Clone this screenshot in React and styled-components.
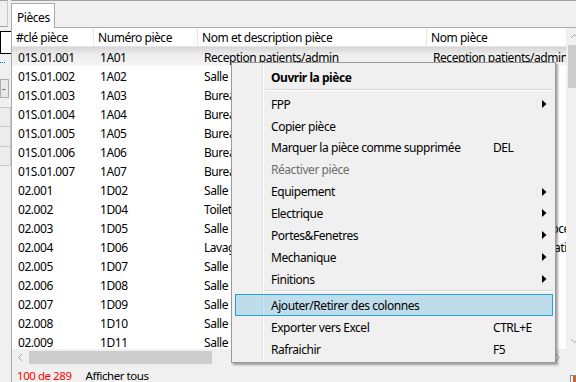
import React from 'react'
import styled, { createGlobalStyle } from 'styled-components'

const GlobalStyle = createGlobalStyle`
    html, body { margin:0; padding:0; background:#f0f0f0; }
    body { font-family:'Noto Sans', 'Open Sans', sans-serif; font-size:12px; letter-spacing:-0.45px; color:#000; }
`

const columns = [82, 104, 229, 320]

const rows = [
    ['01S.01.001', '1A01', 'Reception patients/admin', 'Reception patients/admin'],
    ['01S.01.002', '1A02', 'Salle de consultation', 'Salle de consultation'],
    ['01S.01.003', '1A03', 'Bureau médecin', 'Bureau médecin'],
    ['01S.01.004', '1A04', 'Bureau médecin', 'Bureau médecin'],
    ['01S.01.005', '1A05', 'Bureau infirmière', 'Bureau infirmière'],
    ['01S.01.006', '1A06', 'Bureau administration', 'Bureau administration'],
    ['01S.01.007', '1A07', 'Bureau gestionnaire', 'Bureau gestionnaire'],
    ['02.001', '1D02', 'Salle de réunion', 'Salle de réunion'],
    ['02.002', '1D04', 'Toilettes', 'Toilettes'],
    ['02.003', '1D05', 'Salle de procédures', 'Salle de traitement / procédures'],
    ['02.004', '1D06', 'Lavage et décontamination', 'Lavages et décontamination des instruments'],
    ['02.005', '1D07', 'Salle de consultation', 'Salle de consultation'],
    ['02.006', '1D08', 'Salle de consultation', 'Salle de consultation'],
    ['02.007', '1D09', 'Salle de consultation', 'Salle de consultation'],
    ['02.008', '1D10', 'Salle de consultation', 'Salle de consultation'],
    ['02.009', '1D11', 'Salle de consultation', 'Salle de consultation'],
]

const menu = [
    { label: 'Ouvrir la pièce', bold: true },
    { sep: true },
    { label: 'FPP', sub: true },
    { label: 'Copier pièce' },
    { label: 'Marquer la pièce comme supprimée', key: 'DEL' },
    { label: 'Réactiver pièce', disabled: true },
    { label: 'Equipement', sub: true },
    { label: 'Electrique', sub: true },
    { label: 'Portes&Fenetres', sub: true },
    { label: 'Mechanique', sub: true },
    { label: 'Finitions', sub: true },
    { sep: true },
    { label: 'Ajouter/Retirer des colonnes', active: true },
    { label: 'Exporter vers Excel', key: 'CTRL+E' },
    { label: 'Rafraichir', key: 'F5' },
]

const Chevron = ({ dir }) => {
    const pts = {
        up: '1,6 4.5,2.5 8,6',
        down: '1,3 4.5,6.5 8,3',
        left: '6,1 2.5,4.5 6,8',
        right: '3,1 6.5,4.5 3,8',
    }[dir]
    return (
        <svg width='9' height='9' viewBox='0 0 9 9'>
            <polyline points={pts} fill='none' stroke='#a3a3a3' strokeWidth='1' />
        </svg>
    )
}

const App = () => {
    return (
        <>
            <GlobalStyle />
            <Screen>
                <Sidebar>
                    <SideTop />
                    <SideInput />
                    <SideLink />
                    <SideButton>-</SideButton>
                    <SideList>
                        <span />
                        <span />
                        <span />
                    </SideList>
                </Sidebar>
                <Main>
                    <TabStrip>
                        <Tab>Pièces</Tab>
                    </TabStrip>
                    <Panel>
                        <GridArea>
                            <Table>
                                <HeaderRow>
                                    <HeaderCell $w={columns[0]}>#clé pièce</HeaderCell>
                                    <HeaderCell $w={columns[1]}>Numéro pièce</HeaderCell>
                                    <HeaderCell $w={columns[2]}>Nom et description pièce</HeaderCell>
                                    <HeaderCell $w={columns[3]}>Nom pièce</HeaderCell>
                                </HeaderRow>
                                {rows.map((r, i) => (
                                    <Row key={i} $selected={i === 0}>
                                        {r.map((c, j) => (
                                            <Cell key={j} $w={columns[j]}>{c}</Cell>
                                        ))}
                                    </Row>
                                ))}
                            </Table>
                            <VScroll>
                                <ArrowBox><Chevron dir='up' /></ArrowBox>
                                <VThumb />
                                <Spacer />
                                <ArrowBox><Chevron dir='down' /></ArrowBox>
                            </VScroll>
                            <HScroll>
                                <ArrowBox><Chevron dir='left' /></ArrowBox>
                                <HThumb />
                                <Spacer />
                                <ArrowBox><Chevron dir='right' /></ArrowBox>
                            </HScroll>
                            <Corner />
                        </GridArea>
                        <StatusBar>
                            <Count>100 de 289</Count>
                            <span>Afficher tous</span>
                            <StatusFlag />
                        </StatusBar>
                    </Panel>
                </Main>

                <Menu>
                    {menu.map((m, i) =>
                        m.sep ? (
                            <Separator key={i} />
                        ) : (
                            <MenuItem key={i} $bold={m.bold} $disabled={m.disabled} $active={m.active}>
                                <span>{m.label}</span>
                                <span>{m.key}</span>
                                {m.sub ? (
                                    <svg width='5' height='8' viewBox='0 0 5 8'>
                                        <polygon points='0,0 4.5,4 0,8' fill='#000' />
                                    </svg>
                                ) : <span />}
                            </MenuItem>
                        )
                    )}
                </Menu>
            </Screen>
        </>
    )
}

const Screen = styled.div`
    position:relative;
    width:576px;
    height:382px;
    overflow:hidden;
    display:flex;
    background:#f0f0f0;
`

const Sidebar = styled.div`
    width:11px;
    flex:0 0 11px;
    overflow:hidden;
    display:flex;
    flex-direction:column;
`

const SideTop = styled.div`
    width:8px;
    height:27px;
    box-sizing:border-box;
    border-top:1px solid #a0a0a0;
    border-bottom:1px solid #a0a0a0;
    border-right:1px solid #c8c8c8;
`

const SideInput = styled.div`
    margin-top:4px;
    height:23px;
    width:30px;
    background:#fff;
    border:1px solid #000;
    box-sizing:border-box;
`

const SideLink = styled.div`
    margin-top:8px;
    width:5px;
    border-top:1px dotted #0066cc;
`

const SideButton = styled.div`
    margin-top:16px;
    height:19px;
    width:9px;
    border:1px solid #adadad;
    box-sizing:border-box;
    background:#e8e8e8;
    font-size:11px;
    line-height:15px;
    color:#555;
    padding-left:1px;
`

const SideList = styled.div`
    margin-top:9px;
    width:11px;
    height:59px;
    border:1px solid #c8c8c8;
    border-left:none;
    box-sizing:border-box;
    display:flex;
    flex-direction:column;

    span{
        flex:1;
        border-bottom:1px solid #c8c8c8;
        background:#ececec;
    }
    span:last-child{ border-bottom:none; }
`

const Main = styled.div`
    width:565px;
    flex:0 0 565px;
    display:flex;
    flex-direction:column;
    overflow:hidden;
`

const TabStrip = styled.div`
    height:28px;
    box-sizing:border-box;
    border-top:1px solid #a0a0a0;
    border-bottom:1px solid #acacac;
    display:flex;
    align-items:flex-end;
`

const Tab = styled.div`
    height:25px;
    width:44px;
    box-sizing:border-box;
    margin-bottom:-1px;
    background:#fff;
    border:1px solid #acacac;
    border-bottom:none;
    padding:5px 0 0 5px;
`

const Panel = styled.div`
    flex:1;
    display:flex;
    flex-direction:column;
    border-left:1px solid #acacac;
    min-height:0;
`

const GridArea = styled.div`
    height:338px;
    display:grid;
    grid-template-columns:554px 17px;
    grid-template-rows:321px 17px;
    background:#fff;
`

const Table = styled.div`
    overflow:hidden;
    background:#fff;
`

const HeaderRow = styled.div`
    display:flex;
    height:19px;
    box-sizing:border-box;
    border-bottom:1px solid #e5e5e5;
`

const HeaderCell = styled.div`
    flex:0 0 ${p => p.$w}px;
    box-sizing:border-box;
    padding:2px 0 0 4px;
    line-height:16px;
    white-space:nowrap;
    overflow:hidden;
    border-right:1px solid #e5e5e5;
`

const Row = styled.div`
    display:flex;
    height:19px;
    background:${p => p.$selected ? 'linear-gradient(to bottom, #d6d6d6, #ececec 40%, #f5f5f5)' : '#fff'};
`

const Cell = styled.div`
    flex:0 0 ${p => p.$w}px;
    box-sizing:border-box;
    padding:2px 0 0 6px;
    line-height:17px;
    white-space:nowrap;
    overflow:hidden;
`

const VScroll = styled.div`
    background:#f0f0f0;
    display:flex;
    flex-direction:column;
`

const HScroll = styled.div`
    background:#f0f0f0;
    display:flex;
`

const ArrowBox = styled.div`
    flex:0 0 17px;
    height:17px;
    display:flex;
    align-items:center;
    justify-content:center;
`

const Spacer = styled.div`
    flex:1;
`

const VThumb = styled.div`
    height:43px;
    margin:0 2px;
    background:#cdcdcd;
`

const HThumb = styled.div`
    width:183px;
    margin:2px 0;
    background:#cdcdcd;
`

const Corner = styled.div`
    background:#f0f0f0;
`

const StatusBar = styled.div`
    height:16px;
    display:flex;
    align-items:center;
    gap:14px;
    padding:2px 0 0 5px;
    box-sizing:border-box;
    font-size:11.5px;
    background:#f0f0f0;
`

const Count = styled.span`
    color:#ff0000;
`

const StatusFlag = styled.div`
    margin-left:auto;
    margin-right:-3px;
    margin-top:10px;
    width:9px;
    height:10px;
    border:1px solid #8a8a8a;
    border-right:none;
    box-sizing:border-box;
    background:linear-gradient(to right, #fff 30%, #e8562a 30%);
`

const Menu = styled.div`
    position:absolute;
    left:231px;
    top:62px;
    width:325px;
    height:301px;
    box-sizing:border-box;
    padding:3px 0 2px;
    background:#f0f0f0;
    border:1px solid #999;
    box-shadow:2px 2px 2px rgba(0,0,0,0.35);
    display:flex;
    flex-direction:column;

    &::before{
        content:'';
        position:absolute;
        top:0;
        bottom:0;
        left:30px;
        width:1px;
        background:#e2e2e2;
        border-right:1px solid #fff;
    }
`

const Separator = styled.div`
    height:1px;
    margin:1px 2px 2px 33px;
    background:#d7d7d7;
    border-bottom:1px solid #fff;
`

const MenuItem = styled.div`
    position:relative;
    height:22px;
    margin:0 2px 0 3px;
    box-sizing:border-box;
    display:grid;
    grid-template-columns:222px 1fr 5px;
    align-items:center;
    padding:1px 5px 0 35px;
    white-space:nowrap;
    font-weight:${p => p.$bold ? 700 : 400};
    color:${p => p.$disabled ? '#6d6d6d' : '#000'};
    background:${p => p.$active ? 'rgba(38,160,218,0.24)' : 'transparent'};
    border:1px solid ${p => p.$active ? '#26a0da' : 'transparent'};

    svg{ display:block; }
`

export default App
